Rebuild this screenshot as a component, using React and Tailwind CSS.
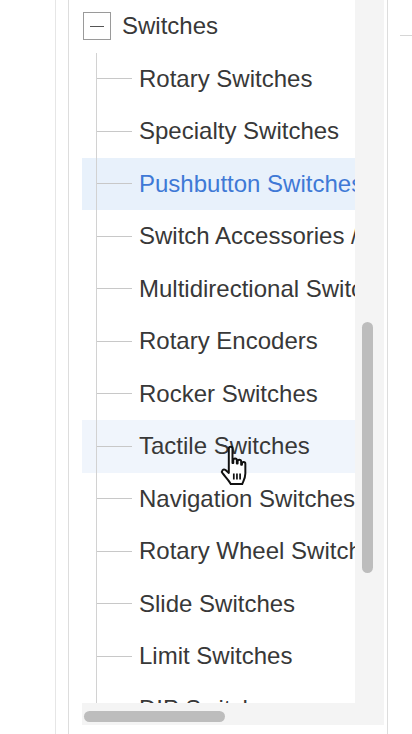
import React from "react";

const items = [
  "Rotary Switches",
  "Specialty Switches",
  "Pushbutton Switches",
  "Switch Accessories / Hardware",
  "Multidirectional Switches",
  "Rotary Encoders",
  "Rocker Switches",
  "Tactile Switches",
  "Navigation Switches",
  "Rotary Wheel Switches",
  "Slide Switches",
  "Limit Switches",
  "DIP Switches",
];

const HandCursor = () => (
  <svg width="42" height="46" viewBox="0 0 32 35" className="absolute left-[217px] top-[444px]">
    <path
      d="M9 3.5 C9 1.6 11.8 1.6 11.8 3.5 L11.8 14.5 L12.4 14.5 L12.4 12.4 C12.4 10.6 15.1 10.6 15.1 12.4 L15.1 14.8 L15.7 14.8 L15.7 13.4 C15.7 11.6 18.4 11.6 18.4 13.4 L18.4 15.8 L19 15.8 L19 15 C19 13.3 21.6 13.3 21.6 15 L21.6 22.5 C21.6 26 20.2 28 19.2 30.5 L10.5 30.5 C9.5 28.2 6.5 25.2 4.2 22.2 C3 20.5 4.8 18.6 6.5 19.8 L9 22 Z"
      fill="#fff"
      stroke="#111"
      strokeWidth="1.5"
      strokeLinejoin="round"
    />
    <path d="M12.8 22.5 L12.8 27 M15.2 22.5 L15.2 27 M17.6 22.5 L17.6 27" stroke="#111" strokeWidth="1.3" />
  </svg>
);

const TreeRow = ({ label, active, hover }) => {
  const bg = active ? "bg-[#e8f1fb]" : hover ? "bg-[#f0f5fc]" : "bg-white";
  const color = active ? "text-[#3f79d6]" : "text-[#383838]";
  return (
    <div className={`flex h-[52.5px] shrink-0 items-center ${bg}`}>
      <div className="w-[14px] shrink-0" />
      <div className="h-full w-px shrink-0 bg-[#d2d2d2]" />
      <div className="h-px w-[35px] shrink-0 bg-[#c8c8c8]" />
      <span className={`ml-[7px] whitespace-nowrap text-[24px] leading-none ${color}`}>{label}</span>
    </div>
  );
};

export default function App() {
  return (
    <div
      className="relative flex h-[734px] w-[412px] overflow-hidden bg-white"
      style={{ fontFamily: '"Liberation Sans", Arial, sans-serif' }}
    >
      <div className="w-[55px] shrink-0" />
      <div className="flex h-full w-[333px] shrink-0 border-l border-[#e6e6e6] pl-[12px]">
        <div className="flex h-full w-full flex-col border-l border-r border-[#dddddd] pl-[13px] pr-[3px]">
          <div className="flex flex-col bg-[#f4f4f4]">
            <div className="flex h-[703px]">
              <div className="flex w-[273px] shrink-0 flex-col overflow-hidden bg-white">
                <div className="flex h-[52.5px] shrink-0 items-center">
                  <div className="ml-[1px] flex h-[28px] w-[28px] shrink-0 items-center justify-center border-[1.5px] border-[#9a9a9a]">
                    <div className="h-[1.5px] w-[14px] bg-[#555]" />
                  </div>
                  <span className="ml-[11px] whitespace-nowrap text-[24px] leading-none text-[#383838]">Switches</span>
                </div>
                {items.map((label, i) => (
                  <TreeRow key={label} label={label} active={i === 2} hover={i === 7} />
                ))}
              </div>
              <div className="flex flex-1 flex-col pl-[7px] pt-[322px]">
                <div className="h-[251px] w-[11px] rounded-full bg-[#bdbdbd]" />
              </div>
            </div>
            <div className="flex h-[22px] pl-[2px] pt-[8px]">
              <div className="h-[11px] w-[141px] rounded-full bg-[#bdbdbd]" />
            </div>
          </div>
        </div>
      </div>
      <div className="flex flex-1 flex-col pl-[12px] pt-[35px]">
        <div className="h-px w-full bg-[#d6d6d6]" />
      </div>
      <HandCursor />
    </div>
  );
}
